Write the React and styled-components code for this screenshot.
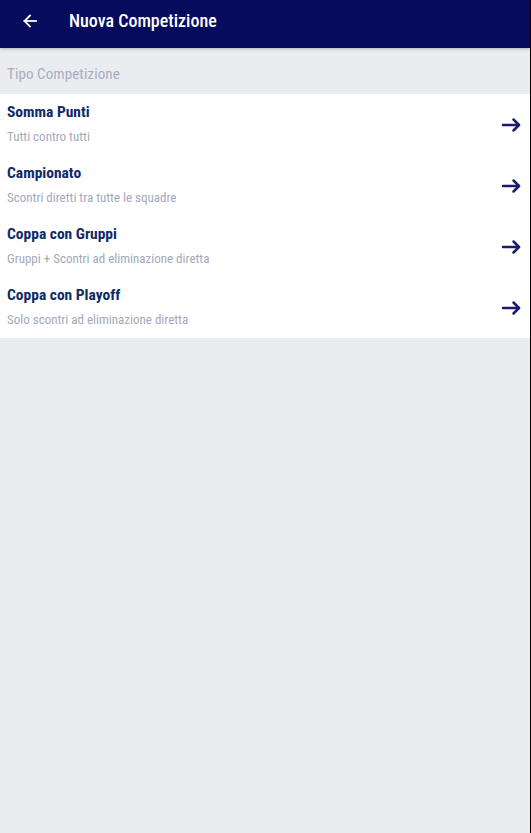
import React from "react"
import styled, { createGlobalStyle } from "styled-components"

const GlobalStyle = createGlobalStyle`
  html, body {
    margin: 0;
    padding: 0;
    background: #ebecf0;
  }
  body {
    font-family: "Roboto Condensed", "Liberation Sans Narrow", "Roboto", sans-serif;
  }
`

const Page = styled.div`
  min-height: 100vh;
  background: #ebecf0;
  border-right: 1px solid #000;
  box-sizing: border-box;
`

const Toolbar = styled.header`
  height: 48px;
  box-sizing: border-box;
  padding-bottom: 7px;
  background: #070b5e;
  display: flex;
  align-items: center;
  box-shadow: 0 1px 3px rgba(0, 0, 0, 0.25);
  position: relative;
  z-index: 1;
`

const BackButton = styled.button`
  width: 60px;
  height: 30px;
  padding: 0 0 0 22px;
  border: none;
  background: transparent;
  display: flex;
  align-items: center;
  cursor: pointer;
`

const Title = styled.h1`
  margin: 0 0 0 9px;
  color: #fff;
  font-size: 18px;
  font-weight: 500;
`

const SectionLabel = styled.div`
  height: 46px;
  box-sizing: border-box;
  padding: 6px 0 0 7px;
  display: flex;
  align-items: center;
  color: #a6adbf;
  font-size: 15px;
  font-weight: 400;
  letter-spacing: 0.1px;
`

const List = styled.ul`
  list-style: none;
  margin: 0;
  padding: 0;
  background: #fff;
`

const Row = styled.li`
  height: 61px;
  box-sizing: border-box;
  display: flex;
  align-items: center;
  justify-content: space-between;
  padding: 0 9px 0 7px;
  cursor: pointer;
`

const Texts = styled.div`
  align-self: flex-start;
  padding-top: 8px;
  display: flex;
  flex-direction: column;
`

const ItemTitle = styled.span`
  color: #0f2a66;
  font-size: 15.5px;
  font-weight: 700;
  line-height: 20px;
`

const ItemSub = styled.span`
  color: #a3a9ba;
  font-size: 13px;
  line-height: 16px;
  margin-top: 7px;
`

const ArrowLeft = () => (
  <svg width="16" height="16" viewBox="0 0 16 16" fill="none" stroke="#fff" strokeWidth="1.8" strokeLinecap="square">
    <path d="M14 8H2.5" />
    <path d="M8 2.5L2.5 8L8 13.5" />
  </svg>
)

const ArrowRight = () => (
  <svg width="20" height="16" viewBox="0 0 20 16" fill="none" stroke="#1b1a6b" strokeWidth="2.5" strokeLinecap="round" strokeLinejoin="round">
    <path d="M2 8H18" />
    <path d="M12.5 2.5L18 8L12.5 13.5" />
  </svg>
)

const tipi = [
  { nome: "Somma Punti", desc: "Tutti contro tutti" },
  { nome: "Campionato", desc: "Scontri diretti tra tutte le squadre" },
  { nome: "Coppa con Gruppi", desc: "Gruppi + Scontri ad eliminazione diretta" },
  { nome: "Coppa con Playoff", desc: "Solo scontri ad eliminazione diretta" },
]

export default function App() {
  return (
    <Page>
      <GlobalStyle />
      <Toolbar>
        <BackButton>
          <ArrowLeft />
        </BackButton>
        <Title>Nuova Competizione</Title>
      </Toolbar>
      <SectionLabel>Tipo Competizione</SectionLabel>
      <List>
        {tipi.map((t) => (
          <Row key={t.nome}>
            <Texts>
              <ItemTitle>{t.nome}</ItemTitle>
              <ItemSub>{t.desc}</ItemSub>
            </Texts>
            <ArrowRight />
          </Row>
        ))}
      </List>
    </Page>
  )
}
